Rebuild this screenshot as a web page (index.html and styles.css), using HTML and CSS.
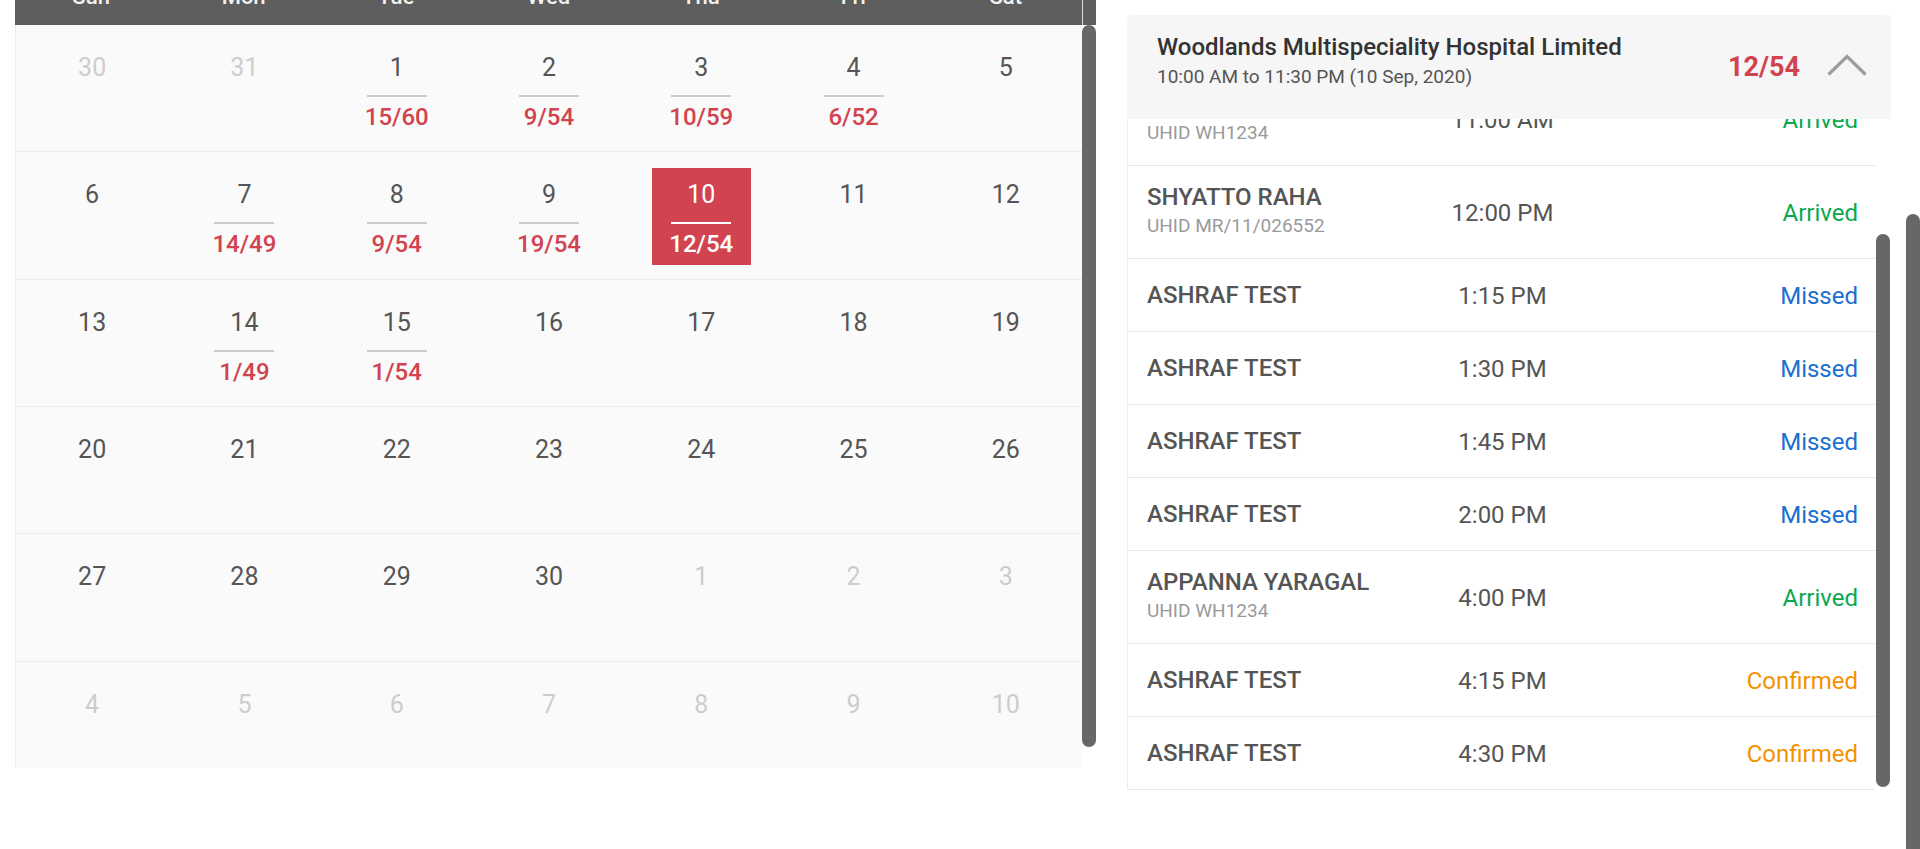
FILE: index.html
```html
<!DOCTYPE html>
<html>
<head>
<meta charset="utf-8">
<link rel="stylesheet" href="styles.css">
</head>
<body>
<div class="page">
  <section class="cal">
    <div class="cal-head">
      <div class="cal-head-grid">
        <div>Sun</div><div>Mon</div><div>Tue</div><div>Wed</div><div>Thu</div><div>Fri</div><div>Sat</div>
      </div>
      <div class="cal-head-gap"></div>
    </div>
    <div class="cal-body">
      <div class="cal-grid">
        <div class="cell"><div class="day other"><span class="num">30</span></div></div>
        <div class="cell"><div class="day other"><span class="num">31</span></div></div>
        <div class="cell"><div class="day"><span class="num">1</span><span class="bar"></span><span class="count">15/60</span></div></div>
        <div class="cell"><div class="day"><span class="num">2</span><span class="bar"></span><span class="count">9/54</span></div></div>
        <div class="cell"><div class="day"><span class="num">3</span><span class="bar"></span><span class="count">10/59</span></div></div>
        <div class="cell"><div class="day"><span class="num">4</span><span class="bar"></span><span class="count">6/52</span></div></div>
        <div class="cell"><div class="day"><span class="num">5</span></div></div>

        <div class="cell"><div class="day"><span class="num">6</span></div></div>
        <div class="cell"><div class="day"><span class="num">7</span><span class="bar"></span><span class="count">14/49</span></div></div>
        <div class="cell"><div class="day"><span class="num">8</span><span class="bar"></span><span class="count">9/54</span></div></div>
        <div class="cell"><div class="day"><span class="num">9</span><span class="bar"></span><span class="count">19/54</span></div></div>
        <div class="cell"><div class="day selected"><span class="num">10</span><span class="bar"></span><span class="count">12/54</span></div></div>
        <div class="cell"><div class="day"><span class="num">11</span></div></div>
        <div class="cell"><div class="day"><span class="num">12</span></div></div>

        <div class="cell"><div class="day"><span class="num">13</span></div></div>
        <div class="cell"><div class="day"><span class="num">14</span><span class="bar"></span><span class="count">1/49</span></div></div>
        <div class="cell"><div class="day"><span class="num">15</span><span class="bar"></span><span class="count">1/54</span></div></div>
        <div class="cell"><div class="day"><span class="num">16</span></div></div>
        <div class="cell"><div class="day"><span class="num">17</span></div></div>
        <div class="cell"><div class="day"><span class="num">18</span></div></div>
        <div class="cell"><div class="day"><span class="num">19</span></div></div>

        <div class="cell"><div class="day"><span class="num">20</span></div></div>
        <div class="cell"><div class="day"><span class="num">21</span></div></div>
        <div class="cell"><div class="day"><span class="num">22</span></div></div>
        <div class="cell"><div class="day"><span class="num">23</span></div></div>
        <div class="cell"><div class="day"><span class="num">24</span></div></div>
        <div class="cell"><div class="day"><span class="num">25</span></div></div>
        <div class="cell"><div class="day"><span class="num">26</span></div></div>

        <div class="cell"><div class="day"><span class="num">27</span></div></div>
        <div class="cell"><div class="day"><span class="num">28</span></div></div>
        <div class="cell"><div class="day"><span class="num">29</span></div></div>
        <div class="cell"><div class="day"><span class="num">30</span></div></div>
        <div class="cell"><div class="day other"><span class="num">1</span></div></div>
        <div class="cell"><div class="day other"><span class="num">2</span></div></div>
        <div class="cell"><div class="day other"><span class="num">3</span></div></div>

        <div class="cell"><div class="day other"><span class="num">4</span></div></div>
        <div class="cell"><div class="day other"><span class="num">5</span></div></div>
        <div class="cell"><div class="day other"><span class="num">6</span></div></div>
        <div class="cell"><div class="day other"><span class="num">7</span></div></div>
        <div class="cell"><div class="day other"><span class="num">8</span></div></div>
        <div class="cell"><div class="day other"><span class="num">9</span></div></div>
        <div class="cell"><div class="day other"><span class="num">10</span></div></div>
      </div>
      <div class="cal-scroll"><div class="thumb cal-thumb"></div></div>
    </div>
  </section>

  <section class="panel">
    <header class="panel-head">
      <div class="panel-title">
        <div class="hosp">Woodlands Multispeciality Hospital Limited</div>
        <div class="hours">10:00 AM to 11:30 PM (10 Sep, 2020)</div>
      </div>
      <div class="panel-count">12/54</div>
      <svg class="chev" width="40" height="22" viewBox="0 0 40 22"><polyline points="1.5,20.5 20,2.5 38.5,20.5" fill="none" stroke="#9d9d9d" stroke-width="3.2"/></svg>
    </header>
    <div class="panel-body">
      <div class="list">
        <div class="row first"><div class="who"><div class="name">APPANNA YARAGAL</div><div class="uhid">UHID WH1234</div></div><div class="time">11:00 AM</div><div class="status arrived">Arrived</div></div>
        <div class="row"><div class="who"><div class="name">SHYATTO RAHA</div><div class="uhid">UHID MR/11/026552</div></div><div class="time">12:00 PM</div><div class="status arrived">Arrived</div></div>
        <div class="row"><div class="who"><div class="name">ASHRAF TEST</div></div><div class="time">1:15 PM</div><div class="status missed">Missed</div></div>
        <div class="row"><div class="who"><div class="name">ASHRAF TEST</div></div><div class="time">1:30 PM</div><div class="status missed">Missed</div></div>
        <div class="row"><div class="who"><div class="name">ASHRAF TEST</div></div><div class="time">1:45 PM</div><div class="status missed">Missed</div></div>
        <div class="row"><div class="who"><div class="name">ASHRAF TEST</div></div><div class="time">2:00 PM</div><div class="status missed">Missed</div></div>
        <div class="row"><div class="who"><div class="name">APPANNA YARAGAL</div><div class="uhid">UHID WH1234</div></div><div class="time">4:00 PM</div><div class="status arrived">Arrived</div></div>
        <div class="row"><div class="who"><div class="name">ASHRAF TEST</div></div><div class="time">4:15 PM</div><div class="status confirmed">Confirmed</div></div>
        <div class="row"><div class="who"><div class="name">ASHRAF TEST</div></div><div class="time">4:30 PM</div><div class="status confirmed">Confirmed</div></div>
      </div>
      <div class="list-scroll"><div class="thumb list-thumb"></div></div>
    </div>
  </section>

  <div class="page-scroll"><div class="thumb page-thumb"></div></div>
</div>
</body>
</html>
```

FILE: styles.css
```css
* { box-sizing: border-box; }
html, body {
  margin: 0;
  padding: 0;
  height: 849px;
  overflow: hidden;
  background: #fff;
  font-family: Roboto, "Liberation Sans", sans-serif;
}
.page {
  display: flex;
  align-items: flex-start;
  padding-left: 15px;
  height: 849px;
  overflow: hidden;
}

/* calendar */
.cal {
  width: 1081px;
  flex: none;
  margin-top: -31px;
}
.cal-head {
  display: flex;
  height: 56px;
  background: #5e5e5e;
}
.cal-head-grid {
  width: 1067px;
  display: grid;
  grid-template-columns: repeat(7, 1fr);
  color: #f2f2f2;
  font-size: 22px;
  font-weight: 500;
  line-height: 56px;
  text-align: center;
}
.cal-head-gap {
  flex: 1;
  border-left: 1px solid #d8d8d8;
}
.cal-body {
  display: flex;
  height: 743px;
  overflow: hidden;
}
.cal-grid {
  width: 1067px;
  display: grid;
  grid-template-columns: repeat(7, 1fr);
  grid-auto-rows: 127.35px;
  background: #fafafa;
  border-left: 1px solid #ececec;
  align-content: start;
}
.cell {
  border-bottom: 1px solid #ececec;
  display: flex;
  justify-content: center;
  padding-top: 16px;
}
.day {
  width: 99px;
  height: 97px;
  display: flex;
  flex-direction: column;
  align-items: center;
  padding-top: 12px;
  color: #555;
}
.num {
  font-size: 25px;
  line-height: 30px;
  font-weight: 400;
}
.day.other { color: #cdcdcd; }
.bar {
  width: 60px;
  height: 2px;
  margin-top: 12px;
  background: #cbcbcb;
}
.count {
  margin-top: 6px;
  font-size: 24px;
  line-height: 28px;
  font-weight: 500;
  color: #d0434f;
}
.day.selected {
  background: #d1444f;
  color: #fff;
}
.day.selected .bar { background: #fff; }
.day.selected .count { color: #fff; }

.thumb {
  background: #676767;
  border-radius: 8px;
}
.cal-scroll {
  width: 14px;
  flex: none;
}
.cal-thumb {
  height: 722px;
}

/* right panel */
.panel {
  width: 764px;
  flex: none;
  margin-left: 31px;
  margin-top: 15px;
}
.panel-head {
  height: 104px;
  background: #f6f6f6;
  border-radius: 5px 5px 0 0;
  display: flex;
  align-items: center;
  padding: 0 24px 0 30px;
}
.panel-title {
  flex: 1;
  align-self: flex-start;
  padding-top: 18px;
}
.hosp {
  font-size: 24px;
  line-height: 28px;
  font-weight: 500;
  color: #333;
}
.hours {
  margin-top: 5px;
  font-size: 19px;
  line-height: 22px;
  color: #555;
}
.panel-count {
  font-size: 27px;
  font-weight: 700;
  color: #d0434f;
  margin-right: 27px;
}
.chev {
  display: block;
  margin-top: -4px;
}
.panel-body {
  display: flex;
  height: 671px;
  overflow: hidden;
}
.list {
  width: 748px;
  flex: none;
  border-left: 1px solid #ececec;
  background: #fff;
}
.row {
  display: grid;
  grid-template-columns: 1fr 1fr 1fr;
  align-items: center;
  min-height: 73px;
  padding: 18px 17px 17px 19px;
  border-bottom: 1px solid #e6e6e6;
}
.row.first { margin-top: -46px; }
.name {
  font-size: 24px;
  line-height: 27px;
  font-weight: 500;
  color: #555;
}
.uhid {
  font-size: 19px;
  line-height: 30px;
  color: #9a9a9a;
}
.time {
  text-align: center;
  font-size: 24px;
  color: #555;
}
.status {
  text-align: right;
  font-size: 24px;
}
.arrived { color: #0aa84f; }
.missed { color: #1a6fd0; }
.confirmed { color: #f39200; }
.list-scroll {
  width: 16px;
  flex: none;
  padding-left: 1px;
  padding-right: 1px;
}
.list-thumb {
  margin-top: 115px;
  height: 553px;
}

.page-scroll {
  width: 14px;
  flex: none;
  margin-left: 15px;
  padding-top: 214px;
}
.page-thumb {
  height: 700px;
}
```
